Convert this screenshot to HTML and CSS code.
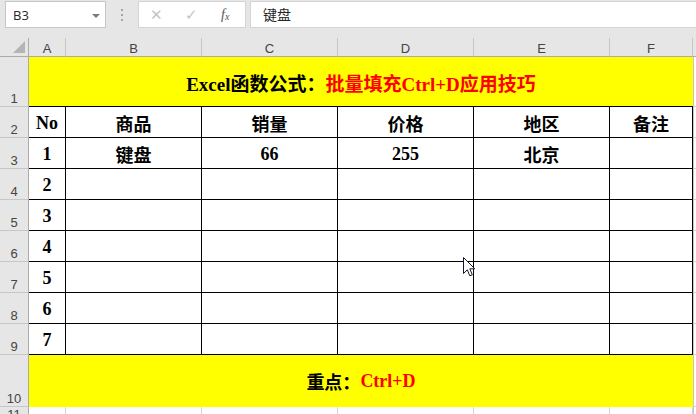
FILE: index.html
```html
<html>
<head>
    <title>Excel Ctrl+D</title>
    <meta charset="utf-8">
    <link rel="stylesheet" href="styles.css">
</head>
<body>

    <div class="topBar">
        <div class="nameBox">
            <span class="nameText">B3</span>
            <span class="dropArrow"></span>
        </div>
        <div class="grip">
            <span></span><span></span><span></span>
        </div>
        <div class="editBox">
            <span class="editIcon">✕</span>
            <span class="editIcon">✓</span>
            <span class="fxIcon">f<sub>x</sub></span>
        </div>
        <div class="formulaBox">键盘</div>
    </div>

    <div class="sheet">
        <!-- column headers -->
        <div class="corner"><span class="cornerMark"></span></div>
        <div class="colHead">A</div>
        <div class="colHead">B</div>
        <div class="colHead">C</div>
        <div class="colHead">D</div>
        <div class="colHead">E</div>
        <div class="colHead">F</div>
        <div class="colHead colRest"></div>

        <!-- row 1 -->
        <div class="rowHead">1</div>
        <div class="yellow titleRow">Excel函数公式：<span class="red">批量填充Ctrl+D应用技巧</span></div>
        <div class="rest"></div>

        <!-- row 2 -->
        <div class="rowHead">2</div>
        <div class="cell">No</div>
        <div class="cell">商品</div>
        <div class="cell">销量</div>
        <div class="cell">价格</div>
        <div class="cell">地区</div>
        <div class="cell">备注</div>
        <div class="rest"></div>

        <!-- row 3 -->
        <div class="rowHead">3</div>
        <div class="cell">1</div>
        <div class="cell">键盘</div>
        <div class="cell">66</div>
        <div class="cell">255</div>
        <div class="cell">北京</div>
        <div class="cell"></div>
        <div class="rest"></div>

        <div class="rowHead">4</div>
        <div class="cell">2</div>
        <div class="cell"></div><div class="cell"></div><div class="cell"></div><div class="cell"></div><div class="cell"></div>
        <div class="rest"></div>

        <div class="rowHead">5</div>
        <div class="cell">3</div>
        <div class="cell"></div><div class="cell"></div><div class="cell"></div><div class="cell"></div><div class="cell"></div>
        <div class="rest"></div>

        <div class="rowHead">6</div>
        <div class="cell">4</div>
        <div class="cell"></div><div class="cell"></div><div class="cell"></div><div class="cell"></div><div class="cell"></div>
        <div class="rest"></div>

        <div class="rowHead">7</div>
        <div class="cell">5</div>
        <div class="cell"></div><div class="cell"></div><div class="cell"></div><div class="cell"></div><div class="cell"></div>
        <div class="rest"></div>

        <div class="rowHead">8</div>
        <div class="cell">6</div>
        <div class="cell"></div><div class="cell"></div><div class="cell"></div><div class="cell"></div><div class="cell"></div>
        <div class="rest"></div>

        <div class="rowHead">9</div>
        <div class="cell">7</div>
        <div class="cell"></div><div class="cell"></div><div class="cell"></div><div class="cell"></div><div class="cell"></div>
        <div class="rest"></div>

        <!-- row 10 -->
        <div class="rowHead">10</div>
        <div class="yellow noteRow">重点：<span class="red">Ctrl+D</span></div>
        <div class="rest"></div>

        <!-- row 11 -->
        <div class="rowHead">11</div>
        <div class="blank"></div><div class="blank"></div><div class="blank"></div><div class="blank"></div><div class="blank"></div><div class="blank"></div>
        <div class="rest"></div>

        <!-- mouse pointer -->
        <svg class="pointer" width="13" height="21" viewBox="0 0 13 21">
            <path d="M0.5 0.5 L0.5 16.5 L4.3 12.8 L6.8 18.8 L9.3 17.8 L6.8 11.8 L11.8 11.8 Z"
                  fill="#fff" stroke="#1a1028" stroke-width="1" stroke-linejoin="miter"/>
        </svg>
    </div>

</body>
</html>
```

FILE: styles.css
```css
body {
    margin: 0px;
    width: 696px;
    height: 414px;
    overflow: hidden;
    background-color: #e6e6e6;
    font-family: "Liberation Sans", Arial, sans-serif;
}

/*  === Formula bar === */

.topBar {
    display: flex;
    align-items: flex-start;
    height: 38px;
    padding-left: 5px;
    padding-top: 1px;
    box-sizing: border-box;
}

.nameBox {
    position: relative;
    display: flex;
    align-items: center;
    width: 101px;
    height: 27px;
    box-sizing: border-box;
    border: 1px solid #c6c6c6;
    background-color: #fff;
    padding-left: 7px;
}

.nameText {
    font-family: "Open Sans", "Liberation Sans", sans-serif;
    font-size: 13px;
    color: #262626;
}

.dropArrow {
    position: absolute;
    right: 5px;
    top: 12px;
    border-left: 4px solid transparent;
    border-right: 4px solid transparent;
    border-top: 4px solid #7a7a7a;
}

.grip {
    display: flex;
    flex-direction: column;
    align-items: center;
    justify-content: center;
    gap: 3px;
    width: 32px;
    height: 27px;
}

.grip span {
    width: 2px;
    height: 2px;
    background-color: #a6a6a6;
}

.editBox {
    display: flex;
    align-items: center;
    width: 108px;
    height: 27px;
    box-sizing: border-box;
    border: 1px solid #d4d4d4;
    background-color: #fff;
    padding-left: 11px;
}

.editIcon {
    width: 35px;
    font-size: 15px;
    color: #c4c4c4;
}

.fxIcon {
    font-family: "Liberation Serif", serif;
    font-style: italic;
    font-size: 14px;
    color: #555;
    margin-left: 1px;
}

.fxIcon sub {
    font-size: 10px;
    vertical-align: -1px;
}

.formulaBox {
    flex: 1;
    height: 27px;
    margin-left: 4px;
    box-sizing: border-box;
    border: 1px solid #d4d4d4;
    border-right: none;
    background-color: #fff;
    padding-left: 12px;
    line-height: 25px;
    font-family: "Noto Sans CJK SC", sans-serif;
    font-size: 14px;
    color: #262626;
}

/*  === Sheet === */

.sheet {
    position: relative;
    display: grid;
    grid-template-columns: 29px 37px 136px 136px 136px 136px 83px 1fr;
    grid-template-rows: 19px 50px repeat(8, 31px) 52px 1fr;
    height: 376px;
    background-color: #fff;
}

.corner {
    position: relative;
    background-color: #e6e6e6;
    border-right: 1px solid #ababab;
    border-bottom: 1px solid #ababab;
}

.cornerMark {
    position: absolute;
    right: 3px;
    bottom: 3px;
    width: 0px;
    height: 0px;
    border-left: 12px solid transparent;
    border-bottom: 12px solid #b4b4b4;
}

.colHead {
    display: flex;
    align-items: center;
    justify-content: center;
    background-color: #e6e6e6;
    border-right: 1px solid #c6c6c6;
    border-bottom: 1px solid #ababab;
    font-size: 13px;
    color: #444;
    padding-top: 2px;
    box-sizing: border-box;
}

.colRest {
    border-right: none;
}

.rowHead {
    display: flex;
    align-items: flex-end;
    justify-content: center;
    background-color: #e6e6e6;
    border-right: 1px solid #ababab;
    border-bottom: 1px solid #c6c6c6;
    font-size: 13px;
    color: #444;
    box-sizing: border-box;
}

.yellow {
    grid-column: span 6;
    display: flex;
    align-items: center;
    justify-content: center;
    background-color: #ffff00;
    font-family: "Liberation Serif", "Noto Sans CJK SC", serif;
    font-weight: bold;
    font-size: 18px;
    color: #000;
}

.titleRow {
    border-bottom: 1px solid #000;
    padding-top: 1px;
    font-size: 19px;
}

.red {
    color: #ff0000;
}

.cell {
    display: flex;
    align-items: center;
    justify-content: center;
    border-right: 1px solid #000;
    border-bottom: 1px solid #000;
    font-family: "Liberation Serif", "Noto Sans CJK SC", serif;
    font-weight: bold;
    font-size: 18px;
    color: #000;
    padding-top: 2px;
    box-sizing: border-box;
}

.rest {
    border-left: 1px solid #c6c6c6;
    border-bottom: 1px solid #d4d4d4;
}

.blank {
    border-right: 1px solid #d4d4d4;
}

.pointer {
    position: absolute;
    left: 463px;
    top: 219px;
}
```
